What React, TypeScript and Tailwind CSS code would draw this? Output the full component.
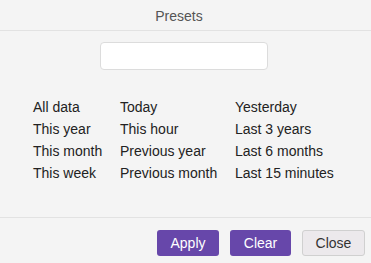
import { useState } from 'react';

const presets = [
  ['All data', 'Today', 'Yesterday'],
  ['This year', 'This hour', 'Last 3 years'],
  ['This month', 'Previous year', 'Last 6 months'],
  ['This week', 'Previous month', 'Last 15 minutes'],
];

export default function App() {
  const [query, setQuery] = useState('');

  return (
    <div className="w-[371px] h-[263px] bg-[#f4f4f4] flex flex-col font-['Liberation_Sans',Arial,sans-serif] text-[14px]">
      {/* Header */}
      <div className="h-[31px] border-b border-[#e2e2e2] flex items-center justify-center text-[#555] pt-[2px] pr-[13px]">
        Presets
      </div>

      {/* Search */}
      <div className="flex justify-center pt-[11px] pr-[4px]">
        <input
          value={query}
          onChange={(e) => setQuery(e.target.value)}
          className="w-[168px] h-[28px] bg-white border border-[#dcdcdc] rounded-[4px] outline-none px-2"
        />
      </div>

      {/* Preset list */}
      <div className="grid grid-cols-[87px_115px_auto] pl-[33px] pt-[26px] text-[#222]">
        {presets.flat().map((label) => (
          <button key={label} className="h-[22px] text-left leading-[22px] cursor-pointer">
            {label}
          </button>
        ))}
      </div>

      {/* Footer */}
      <div className="mt-auto h-[46px] border-t border-[#e2e2e2] flex items-start justify-end gap-[11px] pt-[12px] pr-[6px]">
        <button className="w-[62px] h-[26px] rounded-[3px] bg-[#6747aa] text-white">Apply</button>
        <button className="w-[61px] h-[26px] rounded-[3px] bg-[#6747aa] text-white">Clear</button>
        <button className="w-[63px] h-[26px] rounded-[3px] bg-[#ece9ec] border border-[#d0d0d0] text-[#333]">Close</button>
      </div>
    </div>
  );
}
